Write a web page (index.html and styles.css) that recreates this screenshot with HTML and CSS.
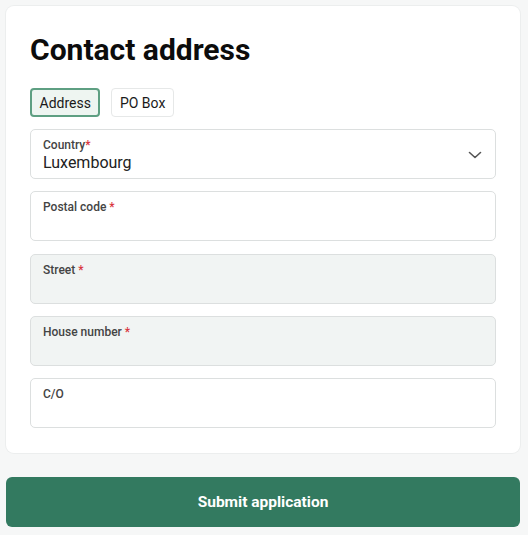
FILE: index.html
```html
<!DOCTYPE html>
<html>
<head>
<meta charset="utf-8">
<link rel="stylesheet" href="styles.css">
</head>
<body>
<div class="page">
  <section class="card">
    <h1 class="title">Contact address</h1>
    <div class="tabs">
      <button class="tab tab-active">Address</button>
      <button class="tab">PO Box</button>
    </div>
    <div class="fields">
      <div class="field field-select">
        <div class="field-body">
          <div class="label">Country<span class="req">*</span></div>
          <div class="value">Luxembourg</div>
        </div>
        <svg class="chevron" width="14" height="8" viewBox="0 0 14 8"><path d="M1.5 1.5 L7 6.5 L12.5 1.5" fill="none" stroke="#555" stroke-width="1.6" stroke-linecap="round" stroke-linejoin="round"/></svg>
      </div>
      <div class="field">
        <div class="label">Postal code <span class="req">*</span></div>
      </div>
      <div class="field field-disabled">
        <div class="label">Street <span class="req">*</span></div>
      </div>
      <div class="field field-disabled">
        <div class="label">House number <span class="req">*</span></div>
      </div>
      <div class="field">
        <div class="label">C/O</div>
      </div>
    </div>
  </section>
  <button class="submit">Submit application</button>
</div>
</body>
</html>
```

FILE: styles.css
```css
* { box-sizing: border-box; }
html, body { margin: 0; padding: 0; }
body {
  background: #f6f7f7;
  font-family: Roboto, "Liberation Sans", sans-serif;
  color: #111;
}
.page {
  padding: 6px 8px 8px 6px;
  display: flex;
  flex-direction: column;
  gap: 24px;
}
.card {
  background: #fff;
  border-radius: 8px;
  box-shadow: 0 0 0 1px #eceeee;
  padding: 24px 24px 25px 24px;
}
.title {
  margin: 0;
  font-size: 30px;
  font-weight: 700;
  line-height: 40px;
  letter-spacing: 0;
  color: #0c0c0c;
}
.tabs {
  display: flex;
  gap: 11px;
  margin-top: 18px;
}
.tab {
  font-family: inherit;
  font-size: 14px;
  color: #1a1a1a;
  background: #fff;
  border: 1px solid #e6e8e8;
  border-radius: 4px;
  height: 29px;
  padding: 0 7.5px;
}
.tab-active {
  background: #eef5f1;
  border: 2px solid #5e9f82;
}
.fields {
  display: flex;
  flex-direction: column;
  gap: 12.3px;
  margin-top: 12px;
}
.field {
  height: 50px;
  border: 1px solid #dcdfdf;
  border-radius: 5px;
  background: #fff;
  padding: 8px 12px;
}
.field-disabled { background: #f1f4f3; }
.field-select {
  display: flex;
  align-items: center;
  justify-content: space-between;
  padding-right: 13px;
}
.field-body { align-self: flex-start; }
.label {
  font-size: 12px;
  font-weight: 500;
  color: #444;
  line-height: 14px;
}
.req { color: #d9363e; }
.value {
  font-size: 16px;
  color: #222;
  line-height: 20px;
  margin-top: 1px;
}
.chevron { margin-top: 2px; }
.submit {
  height: 50px;
  border: none;
  border-radius: 6px;
  background: #337a60;
  color: #fff;
  font-family: inherit;
  font-size: 15.5px;
  font-weight: 700;
}
```
